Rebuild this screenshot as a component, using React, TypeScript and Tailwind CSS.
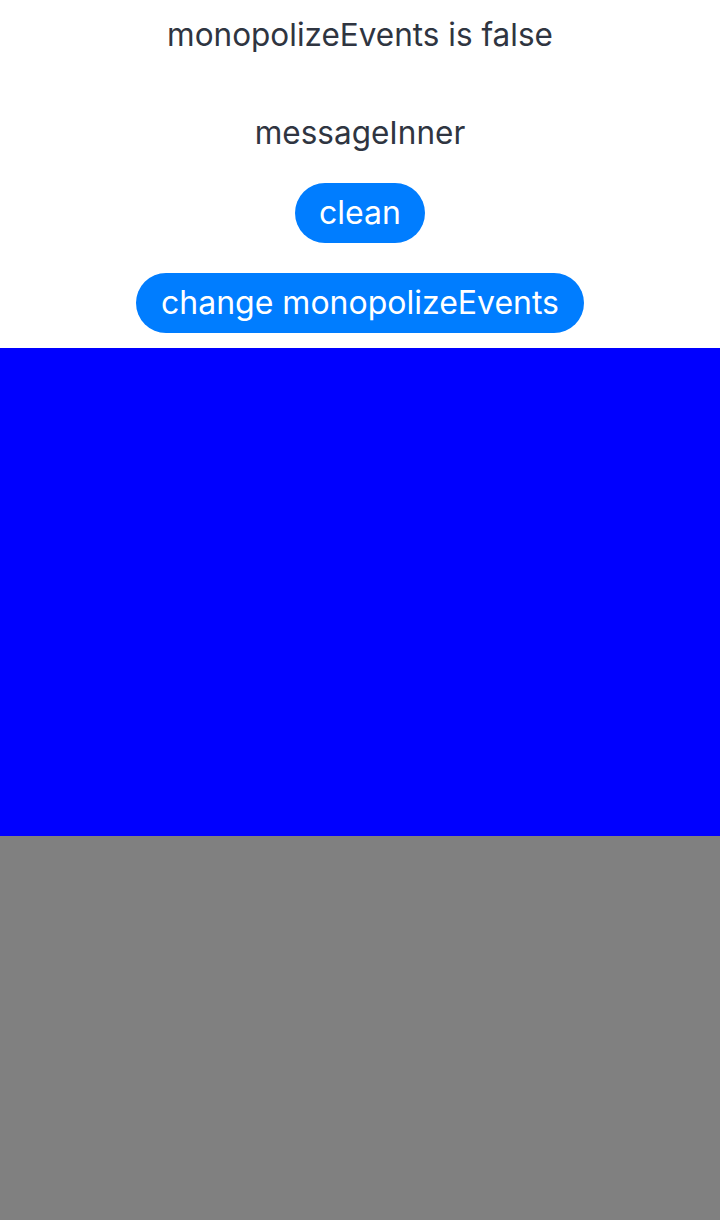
import React, { useState } from 'react';

export default function App() {
  const [monopolize, setMonopolize] = useState<boolean>(false);
  const [message, setMessage] = useState<string>('messageInner');

  return (
    <div className="flex flex-col w-[720px] h-[1220px] bg-white" style={{ fontFamily: 'Inter, "Noto Sans", sans-serif' }}>
      <div className="flex flex-col items-center">
        <div className="h-[70px] flex items-center justify-center text-[31.5px] text-[#2f3541]">
          monopolizeEvents is {monopolize ? 'true' : 'false'}
        </div>
        <div className="mt-[28px] h-[70px] flex items-center justify-center text-[31.5px] text-[#2f3541]">
          {message}
        </div>
        <button
          onClick={() => setMessage('')}
          className="mt-[15px] h-[60px] px-[24px] rounded-full bg-[#007dff] text-white text-[32px] flex items-center justify-center"
        >
          clean
        </button>
        <button
          onClick={() => setMonopolize(!monopolize)}
          className="mt-[30px] mb-[15px] h-[60px] px-[25px] rounded-full bg-[#007dff] text-white text-[32px] flex items-center justify-center"
        >
          change monopolizeEvents
        </button>
      </div>
      <div className="h-[488px] bg-[#0000ff]" />
      <div className="flex-1 bg-[#808080]" />
    </div>
  );
}
